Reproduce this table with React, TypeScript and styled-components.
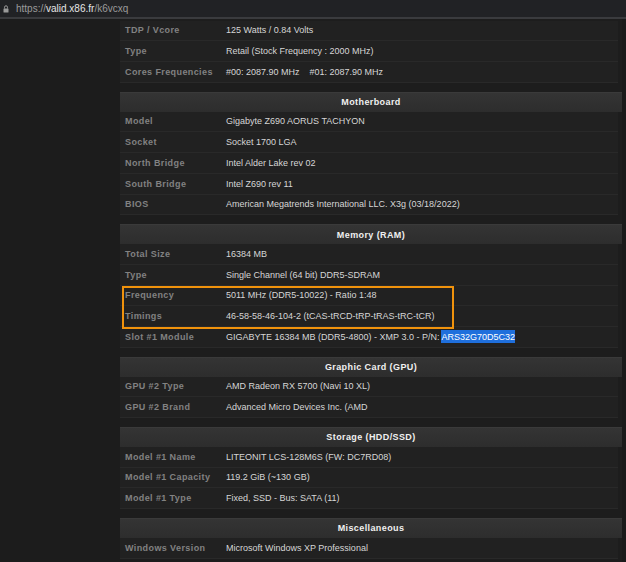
import React from "react";
import styled, { createGlobalStyle } from "styled-components";

const Global = createGlobalStyle`
  html, body { margin: 0; padding: 0; background: #1d1d1d; }
  body { font-family: "Liberation Sans", Arial, sans-serif; }
  * { box-sizing: border-box; }
`;

const Page = styled.div`
  width: 626px;
  height: 562px;
  overflow: hidden;
  background: #1d1d1d;
  display: flex;
  flex-direction: column;
`;

const AddressBar = styled.div`
  height: 17px;
  background: #212225;
  display: flex;
  align-items: center;
  gap: 7px;
  padding-left: 3px;
  border-bottom: 2.5px solid #3a3b3e;
  flex: none;
  box-sizing: content-box;
`;

const Url = styled.span`
  font-family: "Liberation Sans", Arial, sans-serif;
  font-size: 10px;
  color: #9b9b9b;
  letter-spacing: 0;
`;

const Host = styled.span`
  color: #e6e6e6;
`;

const Body = styled.div`
  display: flex;
  flex: 1;
`;

const Gutter = styled.div`
  width: 120px;
  flex: none;
  background: #1c1c1c;
`;

const Table = styled.div`
  width: 502px;
  flex: none;
  display: flex;
  flex-direction: column;
  gap: 8.75px;
  padding-top: 1.5px;
`;

const RightEdge = styled.div`
  flex: 1;
  background: #1a1a1a;
`;

const Section = styled.section`
  display: flex;
  flex-direction: column;
`;

const Header = styled.div`
  height: 20px;
  background: linear-gradient(#343434, #2d2d2d);
  border-top: 1px solid #3a3a3a;
  display: flex;
  align-items: center;
  justify-content: center;
  font-size: 9px;
  font-weight: bold;
  letter-spacing: 0.4px;
  color: #f0f0f0;
`;

const Row = styled.div`
  height: 20.75px;
  display: grid;
  grid-template-columns: 106px 1fr;
  align-items: center;
  background: #212121;
  border-bottom: 1px solid #292929;
  margin-right: 4px;
`;

const Label = styled.div`
  padding-left: 5px;
  font-size: 9px;
  font-weight: bold;
  letter-spacing: 0.4px;
  color: #828282;
  white-space: nowrap;
`;

const Value = styled.div`
  font-size: 9px;
  color: #d6d6d6;
  white-space: pre;
`;

const Selected = styled.span`
  background: #1f6fdc;
  color: #ffffff;
  padding: 1.5px 0;
`;

const Marked = styled.div`
  position: relative;
  &::after {
    content: "";
    position: absolute;
    left: 2px;
    top: 0px;
    width: 328px;
    bottom: -2px;
    border: 2px solid #f0920c;
    pointer-events: none;
  }
`;

type RowData = { label: string; value: React.ReactNode };
type SectionData = { title?: string; rows: RowData[]; marked?: [number, number] };

const sections: SectionData[] = [
  {
    rows: [
      { label: "TDP / Vcore", value: "125 Watts / 0.84 Volts" },
      { label: "Type", value: "Retail (Stock Frequency : 2000 MHz)" },
      { label: "Cores Frequencies", value: "#00: 2087.90 MHz    #01: 2087.90 MHz" },
    ],
  },
  {
    title: "Motherboard",
    rows: [
      { label: "Model", value: "Gigabyte Z690 AORUS TACHYON" },
      { label: "Socket", value: "Socket 1700 LGA" },
      { label: "North Bridge", value: "Intel Alder Lake rev 02" },
      { label: "South Bridge", value: "Intel Z690 rev 11" },
      { label: "BIOS", value: "American Megatrends International LLC. X3g (03/18/2022)" },
    ],
  },
  {
    title: "Memory (RAM)",
    marked: [2, 4],
    rows: [
      { label: "Total Size", value: "16384 MB" },
      { label: "Type", value: "Single Channel (64 bit) DDR5-SDRAM" },
      { label: "Frequency", value: "5011 MHz (DDR5-10022) - Ratio 1:48" },
      { label: "Timings", value: "46-58-58-46-104-2 (tCAS-tRCD-tRP-tRAS-tRC-tCR)" },
      {
        label: "Slot #1 Module",
        value: (
          <>
            GIGABYTE 16384 MB (DDR5-4800) - XMP 3.0 - P/N: <Selected>ARS32G70D5C32</Selected>
          </>
        ),
      },
    ],
  },
  {
    title: "Graphic Card (GPU)",
    rows: [
      { label: "GPU #2 Type", value: "AMD Radeon RX 5700 (Navi 10 XL)" },
      { label: "GPU #2 Brand", value: "Advanced Micro Devices Inc. (AMD" },
    ],
  },
  {
    title: "Storage (HDD/SSD)",
    rows: [
      { label: "Model #1 Name", value: "LITEONIT LCS-128M6S (FW: DC7RD08)" },
      { label: "Model #1 Capacity", value: "119.2 GiB (~130 GB)" },
      { label: "Model #1 Type", value: "Fixed, SSD - Bus: SATA (11)" },
    ],
  },
  {
    title: "Miscellaneous",
    rows: [{ label: "Windows Version", value: "Microsoft Windows XP Professional" }],
  },
];

const Lock = () => (
  <svg width="6" height="8" viewBox="0 0 6 8">
    <path d="M1.5 3.5V2.3a1.5 1.5 0 0 1 3 0v1.2" fill="none" stroke="#9a9a9a" strokeWidth="1" />
    <rect x="0.5" y="3.5" width="5" height="4" rx="0.5" fill="#9a9a9a" />
  </svg>
);

const renderRow = (r: RowData, i: number) => (
  <Row key={i}>
    <Label>{r.label}</Label>
    <Value>{r.value}</Value>
  </Row>
);

export default function App() {
  return (
    <Page>
      <Global />
      <AddressBar>
        <Lock />
        <Url>
          https://<Host>valid.x86.fr</Host>/k6vcxq
        </Url>
      </AddressBar>
      <Body>
        <Gutter />
        <Table>
          {sections.map((s, si) => {
            const rows = s.rows;
            let content: React.ReactNode;
            if (s.marked) {
              const [a, b] = s.marked;
              content = (
                <>
                  {rows.slice(0, a).map((r, i) => renderRow(r, i))}
                  <Marked>{rows.slice(a, b).map((r, i) => renderRow(r, a + i))}</Marked>
                  {rows.slice(b).map((r, i) => renderRow(r, b + i))}
                </>
              );
            } else {
              content = rows.map((r, i) => renderRow(r, i));
            }
            return (
              <Section key={si}>
                {s.title && <Header>{s.title}</Header>}
                {content}
              </Section>
            );
          })}
        </Table>
        <RightEdge />
      </Body>
    </Page>
  );
}
